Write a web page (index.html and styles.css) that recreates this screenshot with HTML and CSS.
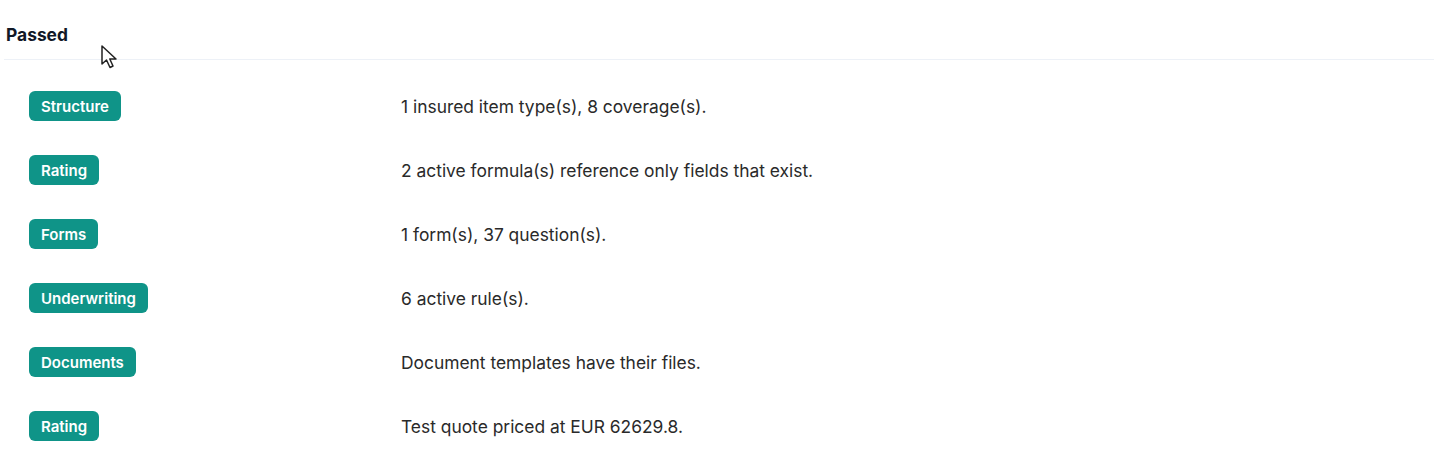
FILE: index.html
```html
<!DOCTYPE html>
<html>
<head>
<meta charset="utf-8">
<link rel="stylesheet" href="styles.css">
</head>
<body>
<div class="panel">
  <h3 class="title">Passed</h3>
  <div class="rows">
    <div class="row"><div class="cat"><span class="badge">Structure</span></div><div class="msg">1 insured item type(s), 8 coverage(s).</div></div>
    <div class="row"><div class="cat"><span class="badge">Rating</span></div><div class="msg">2 active formula(s) reference only fields that exist.</div></div>
    <div class="row"><div class="cat"><span class="badge">Forms</span></div><div class="msg">1 form(s), 37 question(s).</div></div>
    <div class="row"><div class="cat"><span class="badge">Underwriting</span></div><div class="msg">6 active rule(s).</div></div>
    <div class="row"><div class="cat"><span class="badge">Documents</span></div><div class="msg">Document templates have their files.</div></div>
    <div class="row"><div class="cat"><span class="badge">Rating</span></div><div class="msg">Test quote priced at EUR 62629.8.</div></div>
  </div>
</div>
<svg class="cursor" width="22" height="28" viewBox="0 0 22 28"><path d="M2 2 L2 20 L6.5 16 L10 23.5 L13 22 L9.8 15 L16 15 Z" fill="#fff" stroke="#222" stroke-width="1.5" stroke-linejoin="round"/></svg>
</body>
</html>
```
FILE: styles.css
```css
html, body {
  margin: 0;
  padding: 0;
  background: #fff;
  font-family: Inter, "Noto Sans", sans-serif;
}
.panel {
  padding: 24px 16px 0 4px;
}
.title {
  margin: 0;
  padding: 0 0 14px 2px;
  font-size: 17.4px;
  line-height: 21px;
  font-weight: 700;
  color: #111827;
  border-bottom: 1px solid #edf1f7;
}
.rows {
  display: flex;
  flex-direction: column;
}
.row {
  display: grid;
  grid-template-columns: 372px 1fr;
  align-items: center;
  height: 64px;
  padding-left: 25px;
}
.row:first-child {
  margin-top: 14px;
}
.badge {
  display: inline-flex;
  align-items: center;
  height: 30px;
  padding: 0 12px;
  border-radius: 6px;
  background: #0f9488;
  color: #fff;
  font-size: 15px;
  font-weight: 600;
  box-sizing: border-box;
}
.msg {
  font-size: 17.4px;
  color: #2a2a2a;
}
.cursor {
  position: absolute;
  left: 100px;
  top: 44px;
}
```
